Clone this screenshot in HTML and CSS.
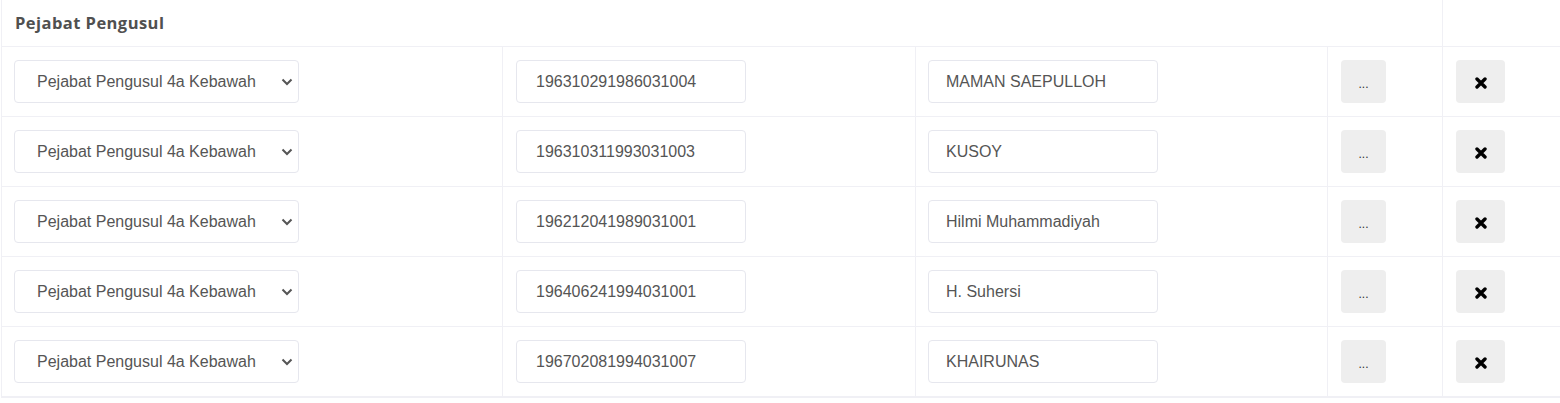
FILE: index.html
```html
<!DOCTYPE html>
<html lang="id">
<head>
<meta charset="utf-8">
<title>Pejabat Pengusul</title>
<link rel="stylesheet" href="styles.css">
</head>
<body>
<div class="wrap">
<table class="grid">
  <colgroup>
    <col class="c1"><col class="c2"><col class="c3"><col class="c4"><col class="c5">
  </colgroup>
  <thead>
    <tr><th colspan="4" class="title">Pejabat Pengusul</th><th></th></tr>
  </thead>
  <tbody>
    <tr>
      <td class="k1"><div class="sel"><select><option>Pejabat Pengusul 4a Kebawah</option></select><svg class="chev" viewBox="0 0 12 8" width="12" height="8"><path d="M1.5 1.5 6 6 10.5 1.5" fill="none" stroke="#555" stroke-width="2"/></svg></div></td>
      <td><input class="nip" type="text" value="196310291986031004"></td>
      <td class="k3"><input class="nama" type="text" value="MAMAN SAEPULLOH"></td>
      <td><button class="btn dots">...</button></td>
      <td><button class="btn del"><svg viewBox="0 0 12 12" width="12" height="12"><path d="M2 2 10 10M10 2 2 10" stroke="#000" stroke-width="3.4" stroke-linecap="round"/></svg></button></td>
    </tr>
    <tr>
      <td class="k1"><div class="sel"><select><option>Pejabat Pengusul 4a Kebawah</option></select><svg class="chev" viewBox="0 0 12 8" width="12" height="8"><path d="M1.5 1.5 6 6 10.5 1.5" fill="none" stroke="#555" stroke-width="2"/></svg></div></td>
      <td><input class="nip" type="text" value="196310311993031003"></td>
      <td class="k3"><input class="nama" type="text" value="KUSOY"></td>
      <td><button class="btn dots">...</button></td>
      <td><button class="btn del"><svg viewBox="0 0 12 12" width="12" height="12"><path d="M2 2 10 10M10 2 2 10" stroke="#000" stroke-width="3.4" stroke-linecap="round"/></svg></button></td>
    </tr>
    <tr>
      <td class="k1"><div class="sel"><select><option>Pejabat Pengusul 4a Kebawah</option></select><svg class="chev" viewBox="0 0 12 8" width="12" height="8"><path d="M1.5 1.5 6 6 10.5 1.5" fill="none" stroke="#555" stroke-width="2"/></svg></div></td>
      <td><input class="nip" type="text" value="196212041989031001"></td>
      <td class="k3"><input class="nama" type="text" value="Hilmi Muhammadiyah"></td>
      <td><button class="btn dots">...</button></td>
      <td><button class="btn del"><svg viewBox="0 0 12 12" width="12" height="12"><path d="M2 2 10 10M10 2 2 10" stroke="#000" stroke-width="3.4" stroke-linecap="round"/></svg></button></td>
    </tr>
    <tr>
      <td class="k1"><div class="sel"><select><option>Pejabat Pengusul 4a Kebawah</option></select><svg class="chev" viewBox="0 0 12 8" width="12" height="8"><path d="M1.5 1.5 6 6 10.5 1.5" fill="none" stroke="#555" stroke-width="2"/></svg></div></td>
      <td><input class="nip" type="text" value="196406241994031001"></td>
      <td class="k3"><input class="nama" type="text" value="H. Suhersi"></td>
      <td><button class="btn dots">...</button></td>
      <td><button class="btn del"><svg viewBox="0 0 12 12" width="12" height="12"><path d="M2 2 10 10M10 2 2 10" stroke="#000" stroke-width="3.4" stroke-linecap="round"/></svg></button></td>
    </tr>
    <tr>
      <td class="k1"><div class="sel"><select><option>Pejabat Pengusul 4a Kebawah</option></select><svg class="chev" viewBox="0 0 12 8" width="12" height="8"><path d="M1.5 1.5 6 6 10.5 1.5" fill="none" stroke="#555" stroke-width="2"/></svg></div></td>
      <td><input class="nip" type="text" value="196702081994031007"></td>
      <td class="k3"><input class="nama" type="text" value="KHAIRUNAS"></td>
      <td><button class="btn dots">...</button></td>
      <td><button class="btn del"><svg viewBox="0 0 12 12" width="12" height="12"><path d="M2 2 10 10M10 2 2 10" stroke="#000" stroke-width="3.4" stroke-linecap="round"/></svg></button></td>
    </tr>
  </tbody>
</table>
</div>
</body>
</html>
```
FILE: styles.css
```css
html, body {
  margin: 0;
  padding: 0;
  background: #fff;
}
body {
  font-family: "Liberation Sans", Arial, sans-serif;
  color: #555;
  overflow: hidden;
}
.wrap {
  padding-left: 1px;
}
.grid {
  border-collapse: collapse;
  table-layout: fixed;
  width: 1600px;
}
.c1 { width: 501px; }
.c2 { width: 413px; }
.c3 { width: 412px; }
.c4 { width: 115px; }
.c5 { width: 159px; }
.grid th,
.grid td {
  border: 1px solid #f0f0f5;
  padding: 13px 13px;
  vertical-align: middle;
  text-align: left;
}
.grid td {
  height: 43px;
}
.grid td.k1 {
  padding-left: 12px;
}
.grid td.k3 {
  padding-left: 12px;
}
.grid thead th {
  border-top: none;
  height: 20px;
  line-height: 20px;
  padding: 13px 13px 13px 13px;
}
.grid tbody tr:last-child td {
  border-bottom: 2px solid #f0f0f5;
}
.title {
  font-family: "Open Sans", "Liberation Sans", sans-serif;
  font-weight: 700;
  font-size: 16.5px;
  letter-spacing: 0.45px;
  color: #505050;
}
.sel {
  position: relative;
  width: 285px;
}
.sel select {
  appearance: none;
  -webkit-appearance: none;
  display: block;
  width: 285px;
  height: 43px;
  box-sizing: border-box;
  border: 1px solid #e6e7ee;
  border-radius: 4px;
  background: #fff;
  padding: 0 30px 0 22px;
  font-family: "Liberation Sans", Arial, sans-serif;
  font-size: 16px;
  color: #555;
}
.chev {
  position: absolute;
  right: 6px;
  top: 18px;
  pointer-events: none;
}
.grid input {
  display: block;
  width: 230px;
  height: 43px;
  box-sizing: border-box;
  border: 1px solid #e6e7ee;
  border-radius: 4px;
  padding: 0 18px 0 19px;
  font-family: "Liberation Sans", Arial, sans-serif;
  font-size: 16px;
  color: #555;
  background: #fff;
}
.grid input.nama {
  padding-left: 17px;
}
.btn {
  display: flex;
  align-items: center;
  justify-content: center;
  height: 43px;
  border: none;
  border-radius: 4px;
  background: #eeeeee;
  padding: 0;
  cursor: pointer;
}
.dots {
  width: 45px;
  font-family: "Liberation Sans", Arial, sans-serif;
  font-size: 12px;
  color: #333;
  padding-top: 5px;
}
.del {
  width: 49px;
}
.del svg {
  margin-top: 2px;
}
```
